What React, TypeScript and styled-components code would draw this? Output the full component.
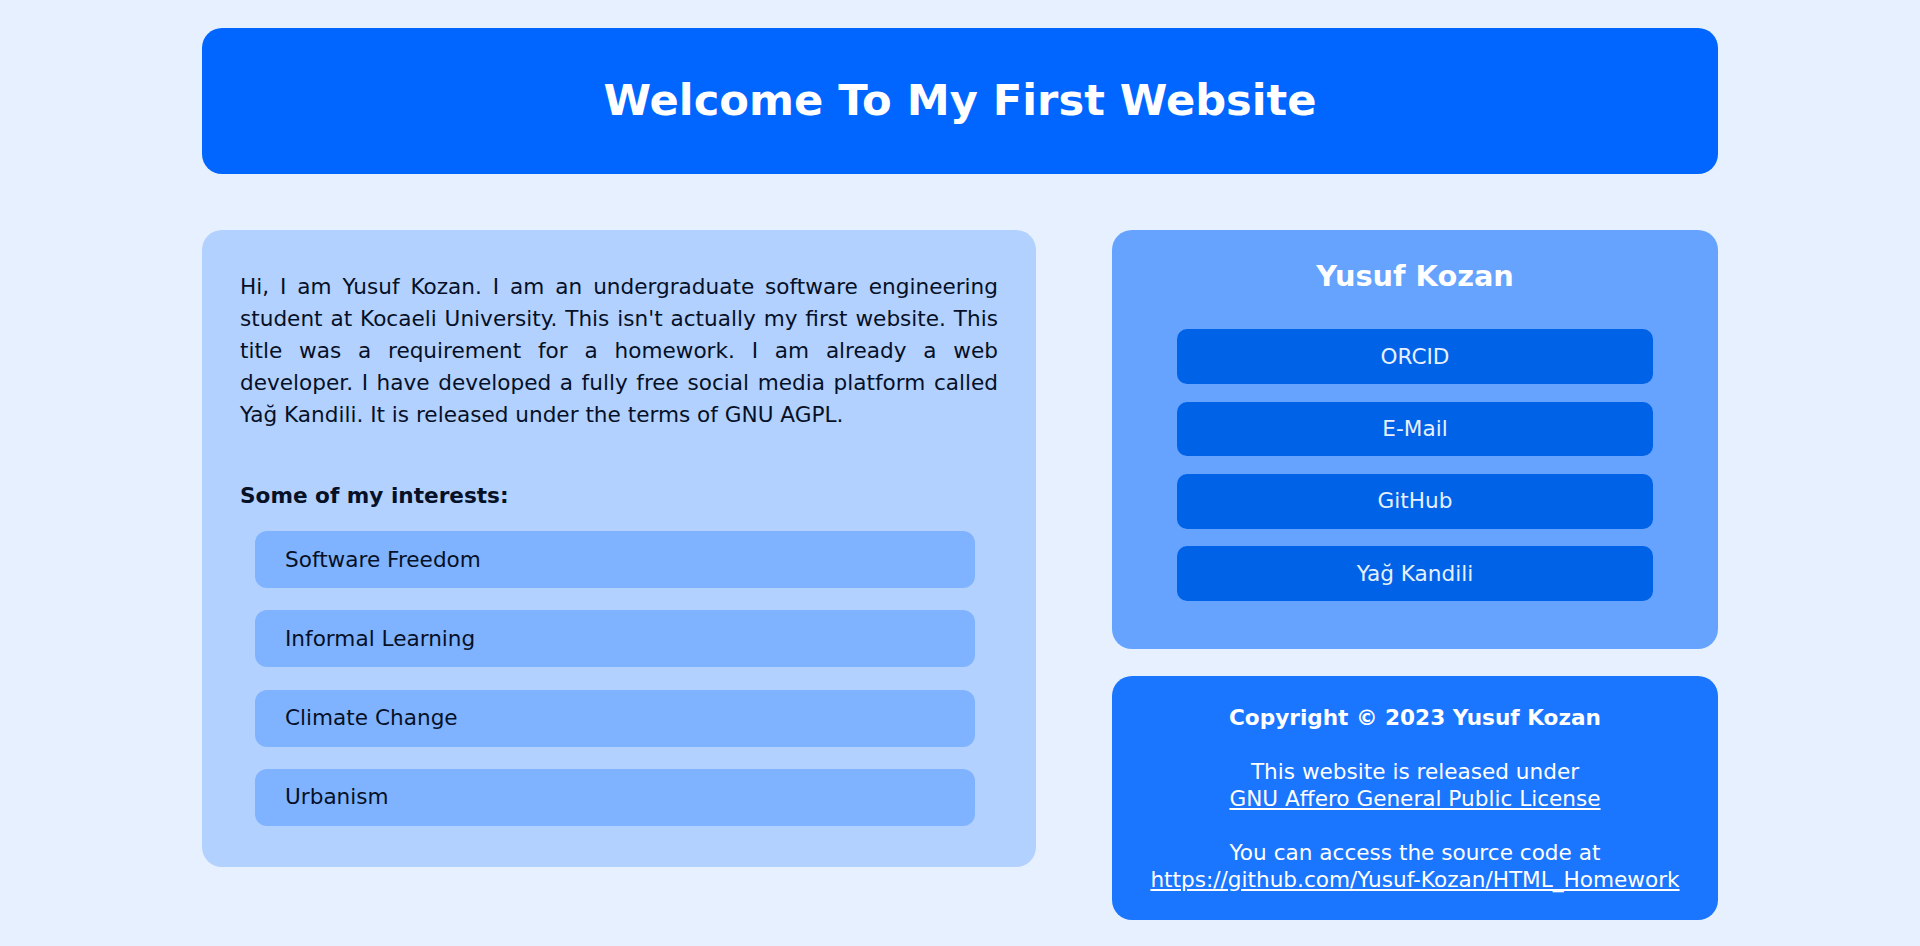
import React from "react";
import styled, { createGlobalStyle } from "styled-components";

const GlobalStyle = createGlobalStyle`
  html, body {
    margin: 0;
    padding: 0;
    background: #e6f0ff;
  }
  body {
    font-family: "DejaVu Sans", "Liberation Sans", sans-serif;
    font-size: 21.6px;
    color: #061027;
  }
  * { box-sizing: border-box; }
`;

const Page = styled.div`
  width: 1516px;
  margin: 0 auto;
  padding-top: 28px;
  display: flex;
  flex-direction: column;
  gap: 56px;
`;

const Header = styled.header`
  height: 146px;
  background: #0066ff;
  border-radius: 20px;
  display: flex;
  align-items: center;
  justify-content: center;
`;

const Title = styled.h1`
  margin: 0;
  color: #ffffff;
  font-size: 43.2px;
  font-weight: bold;
  line-height: 1.2;
`;

const Columns = styled.div`
  display: flex;
  justify-content: space-between;
  align-items: flex-start;
`;

const MainCard = styled.main`
  width: 834px;
  background: #b3d1ff;
  border-radius: 20px;
  padding: 40.5px 38px 41px 38px;
`;

const Intro = styled.p`
  margin: 0 0 48px 0;
  line-height: 32.2px;
  text-align: justify;
`;

const InterestsTitle = styled.h3`
  margin: 0 0 19.5px 0;
  font-size: 21.6px;
  font-weight: bold;
  line-height: 32px;
`;

const InterestList = styled.ul`
  list-style: none;
  margin: 0 0 0 15px;
  padding: 0;
  width: 720px;
  display: flex;
  flex-direction: column;
  gap: 22.3px;
`;

const Interest = styled.li`
  background: #80b3ff;
  border-radius: 12px;
  padding: 12.5px 30px;
  line-height: 32px;
`;

const Side = styled.aside`
  width: 606px;
  display: flex;
  flex-direction: column;
  gap: 27px;
`;

const ProfileCard = styled.section`
  background: #66a3ff;
  border-radius: 20px;
  padding: 28px 65px 47.4px 65px;
  display: flex;
  flex-direction: column;
  align-items: stretch;
`;

const Name = styled.h2`
  margin: 0 0 35.3px 0;
  color: #ffffff;
  text-align: center;
  font-size: 28.8px;
  font-weight: bold;
  line-height: 36px;
`;

const LinkList = styled.div`
  display: flex;
  flex-direction: column;
  gap: 17.7px;
`;

const LinkButton = styled.a`
  display: block;
  background: #0062e6;
  color: #e6f0ff;
  text-decoration: none;
  text-align: center;
  border-radius: 10px;
  padding: 11.35px 0;
  line-height: 32px;
`;

const FooterCard = styled.footer`
  background: #1a75ff;
  border-radius: 20px;
  padding: 28px 10px 26.6px 10px;
  color: #ffffff;
  text-align: center;
  line-height: 27.1px;
`;

const Strong = styled.strong`
  font-weight: bold;
`;

const FooterLink = styled.a`
  color: #ffffff;
  text-decoration: underline;
`;

const interests = [
  "Software Freedom",
  "Informal Learning",
  "Climate Change",
  "Urbanism",
];

const links = ["ORCID", "E-Mail", "GitHub", "Yağ Kandili"];

export default function App() {
  return (
    <>
      <GlobalStyle />
      <Page>
        <Header>
          <Title>Welcome To My First Website</Title>
        </Header>
        <Columns>
          <MainCard>
            <Intro>
              Hi, I am Yusuf Kozan. I am an undergraduate software engineering
              student at Kocaeli University. This isn't actually my first
              website. This title was a requirement for a homework. I am already
              a web developer. I have developed a fully free social media
              platform called Yağ Kandili. It is released under the terms of GNU
              AGPL.
            </Intro>
            <InterestsTitle>Some of my interests:</InterestsTitle>
            <InterestList>
              {interests.map((i) => (
                <Interest key={i}>{i}</Interest>
              ))}
            </InterestList>
          </MainCard>
          <Side>
            <ProfileCard>
              <Name>Yusuf Kozan</Name>
              <LinkList>
                {links.map((l) => (
                  <LinkButton key={l} href="#">
                    {l}
                  </LinkButton>
                ))}
              </LinkList>
            </ProfileCard>
            <FooterCard>
              <Strong>Copyright © 2023 Yusuf Kozan</Strong>
              <br />
              <br />
              This website is released under
              <br />
              <FooterLink href="#">GNU Affero General Public License</FooterLink>
              <br />
              <br />
              You can access the source code at
              <br />
              <FooterLink href="#">
                https://github.com/Yusuf-Kozan/HTML_Homework
              </FooterLink>
            </FooterCard>
          </Side>
        </Columns>
      </Page>
    </>
  );
}
